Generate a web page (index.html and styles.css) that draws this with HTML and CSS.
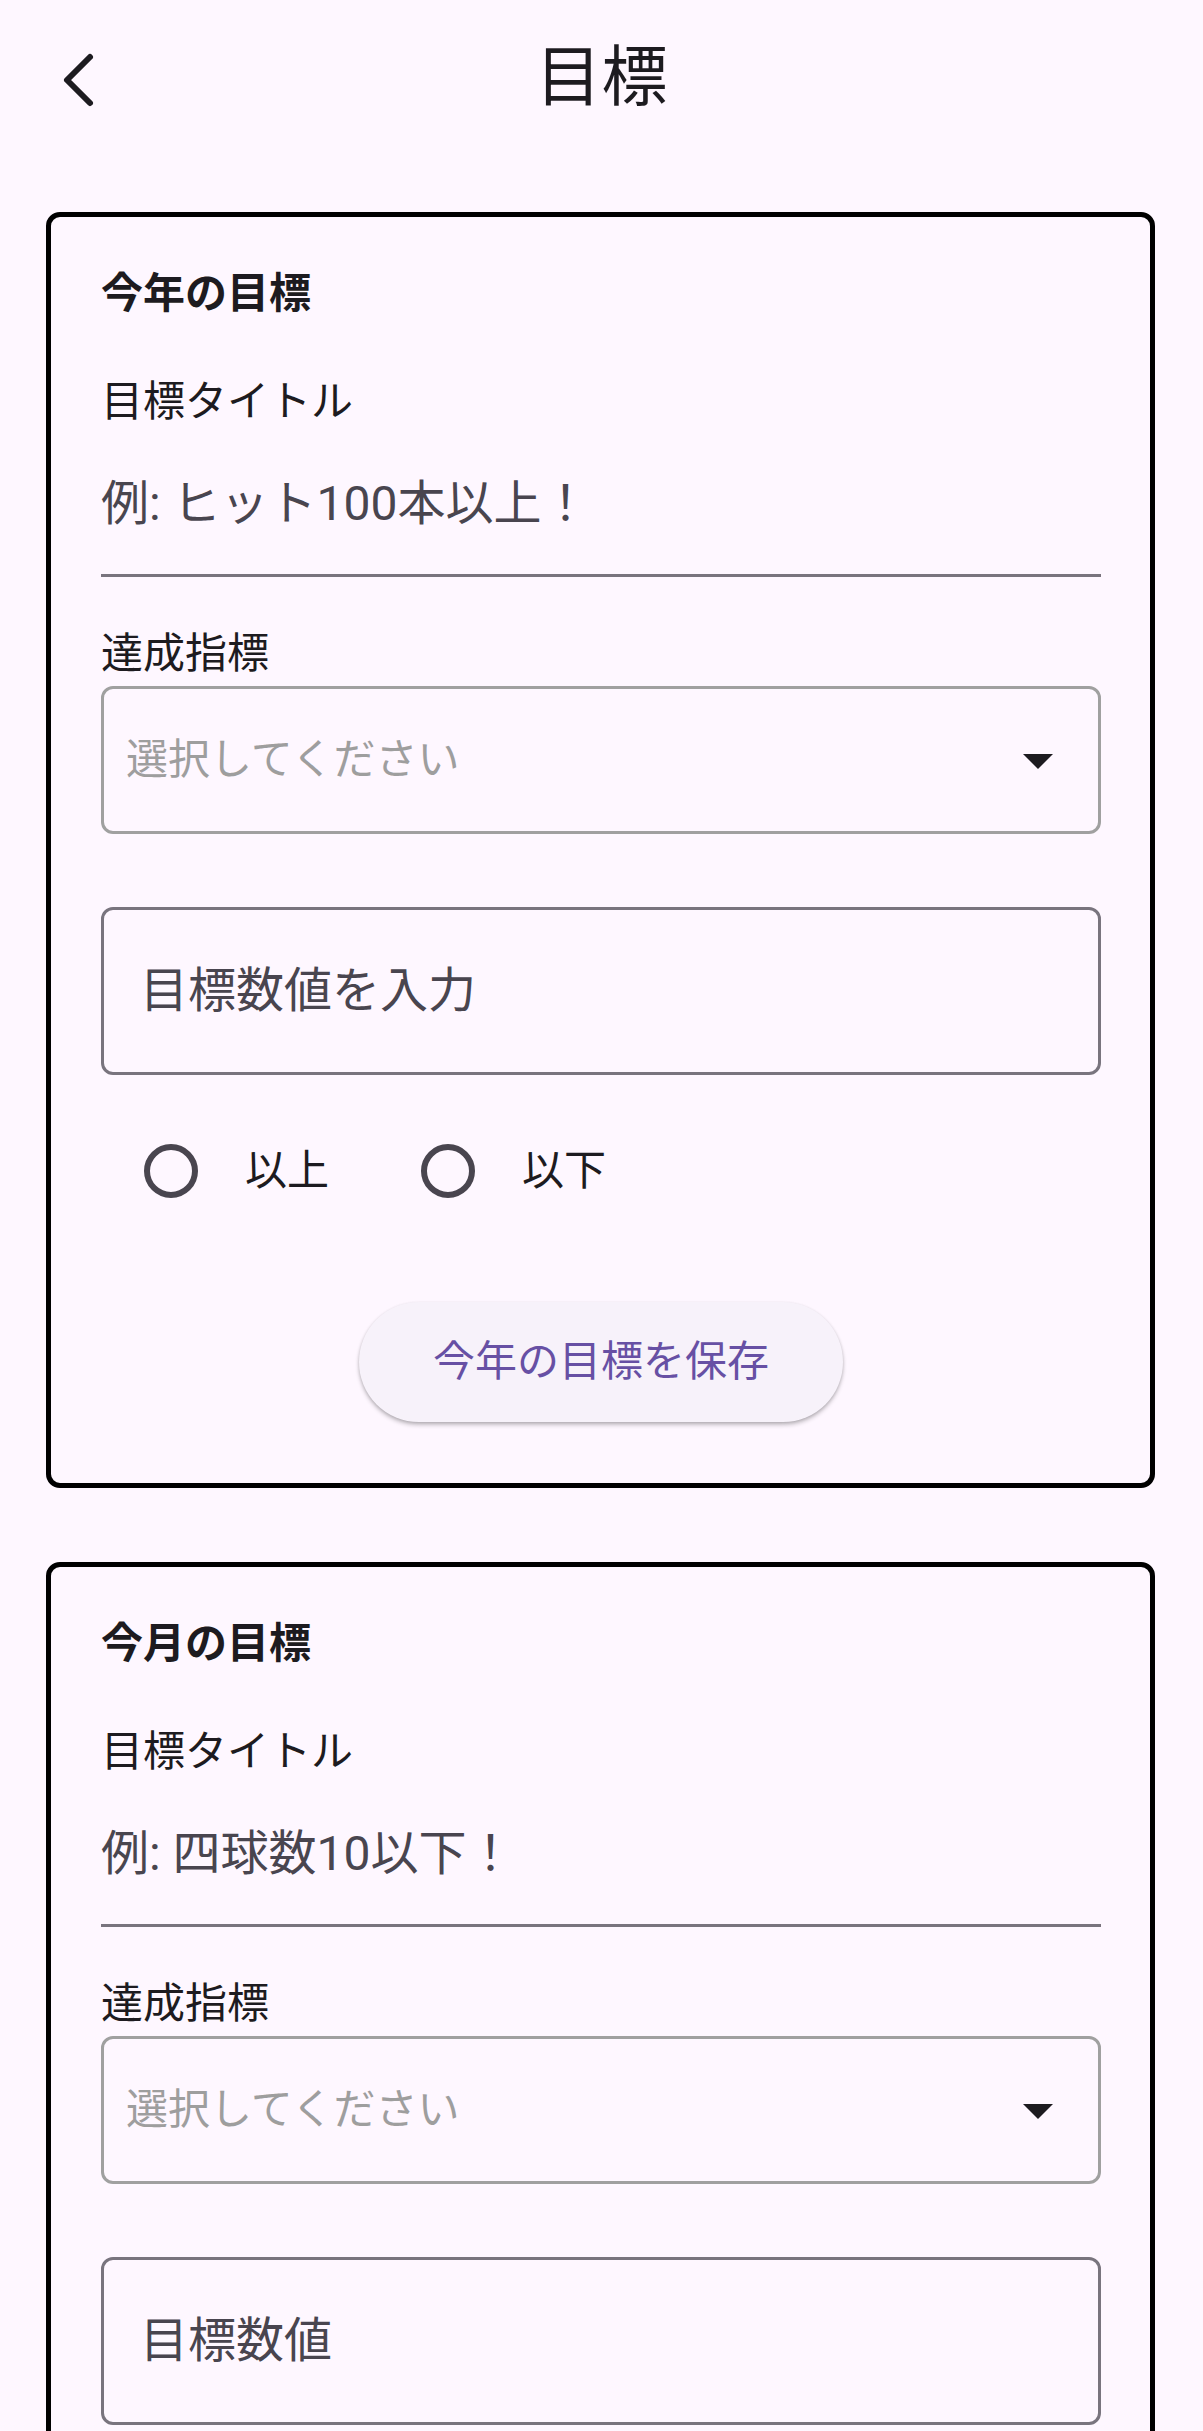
FILE: index.html
```html
<!DOCTYPE html>
<html lang="ja">
<head>
<meta charset="utf-8">
<title>目標</title>
<link rel="stylesheet" href="styles.css">
</head>
<body>
<header class="appbar">
  <div class="appbar-left">
    <svg class="back" width="48" height="60" viewBox="0 0 48 60" aria-label="戻る">
      <polyline points="36,8 13,31 36,54" fill="none" stroke="#1d1b20" stroke-width="6" stroke-linecap="round" stroke-linejoin="round"/>
    </svg>
  </div>
  <h1 class="title">目標</h1>
  <div class="appbar-right"></div>
</header>

<main class="content">
  <section class="card">
    <h2 class="card-heading">今年の目標</h2>
    <div class="label label-title">目標タイトル</div>
    <div class="underline-field"><span class="hint">例: ヒット100本以上！</span></div>
    <div class="label label-metric">達成指標</div>
    <div class="dropdown">
      <span class="placeholder">選択してください</span>
      <svg class="arrow" width="30" height="15" viewBox="0 0 30 15"><polygon points="0,0 30,0 15,15" fill="#1d1b20"/></svg>
    </div>
    <div class="outlined-input"><span class="hint">目標数値を入力</span></div>
    <div class="radio-row">
      <div class="radio"><span class="radio-circle"></span></div>
      <span class="radio-label">以上</span>
      <div class="radio radio-second"><span class="radio-circle"></span></div>
      <span class="radio-label">以下</span>
    </div>
    <div class="button-row">
      <button class="save-btn">今年の目標を保存</button>
    </div>
  </section>

  <section class="card card-second">
    <h2 class="card-heading">今月の目標</h2>
    <div class="label label-title">目標タイトル</div>
    <div class="underline-field"><span class="hint">例: 四球数10以下！</span></div>
    <div class="label label-metric">達成指標</div>
    <div class="dropdown">
      <span class="placeholder">選択してください</span>
      <svg class="arrow" width="30" height="15" viewBox="0 0 30 15"><polygon points="0,0 30,0 15,15" fill="#1d1b20"/></svg>
    </div>
    <div class="outlined-input"><span class="hint">目標数値</span></div>
  </section>
</main>
</body>
</html>
```

FILE: styles.css
```css
* { box-sizing: border-box; }

html, body {
  margin: 0;
  padding: 0;
  background: #fef7ff;
}

body {
  font-family: Roboto, "Noto Sans CJK JP", "Noto Sans", sans-serif;
  color: #1d1b20;
  overflow: hidden;
}

.appbar {
  height: 156px;
  display: grid;
  grid-template-columns: 1fr auto 1fr;
  align-items: center;
}

.appbar-left {
  display: flex;
  align-items: center;
}

.back {
  display: block;
  margin-left: 54px;
  margin-top: 2px;
}

.title {
  margin: 0;
  font-size: 66px;
  line-height: 66px;
  font-weight: 400;
  color: #1d1b20;
}

.content {
  padding-top: 56px;
}

.card {
  margin: 0 48px 0 46px;
  border: 5px solid #000;
  border-radius: 14px;
  padding: 56px 49px 61px 50px;
}

.card-second {
  margin-top: 74px;
  padding-bottom: 120px;
}

.card-heading {
  margin: 0;
  font-size: 42px;
  line-height: 42px;
  font-weight: 700;
  color: #1d1b20;
}

.label {
  font-size: 42px;
  line-height: 42px;
  color: #1d1b20;
}

.label-title {
  margin-top: 66px;
}

.underline-field {
  margin-top: 57px;
  padding-bottom: 46px;
  border-bottom: 3px solid #79747e;
}

.hint {
  display: block;
  font-size: 48px;
  line-height: 48px;
  color: #49454f;
}

.label-metric {
  margin-top: 56px;
}

.dropdown {
  margin-top: 11px;
  height: 148px;
  border: 3px solid #a0a0a0;
  border-radius: 12px;
  padding: 0 45px 0 22px;
  display: flex;
  align-items: center;
  justify-content: space-between;
}

.placeholder {
  font-size: 42px;
  line-height: 42px;
  color: #9e9e9e;
}

.arrow {
  display: block;
  margin-top: 2px;
}

.outlined-input {
  margin-top: 73px;
  height: 168px;
  border: 3px solid #79747e;
  border-radius: 12px;
  padding: 0 36px;
  display: flex;
  align-items: center;
}

.radio-row {
  margin-top: 24px;
  height: 144px;
  display: flex;
  align-items: center;
  margin-left: -2px;
}

.radio {
  width: 144px;
  height: 144px;
  display: flex;
  align-items: center;
  justify-content: center;
}

.radio-second {
  margin-left: 47px;
}

.radio-circle {
  width: 54px;
  height: 54px;
  border: 6px solid #49454f;
  border-radius: 50%;
}

.radio-label {
  font-size: 42px;
  line-height: 42px;
  color: #1d1b20;
  margin-left: 2px;
}

.button-row {
  margin-top: 59px;
  display: flex;
  justify-content: center;
}

.save-btn {
  height: 120px;
  width: 484px;
  border: none;
  border-radius: 60px;
  background: #f7f2fa;
  color: #6750a4;
  font-family: Roboto, "Noto Sans CJK JP", sans-serif;
  font-size: 42px;
  line-height: 42px;
  padding: 0;
  box-shadow: 0 3px 4px rgba(0, 0, 0, 0.22), 0 1px 3px rgba(0, 0, 0, 0.12);
}
```
